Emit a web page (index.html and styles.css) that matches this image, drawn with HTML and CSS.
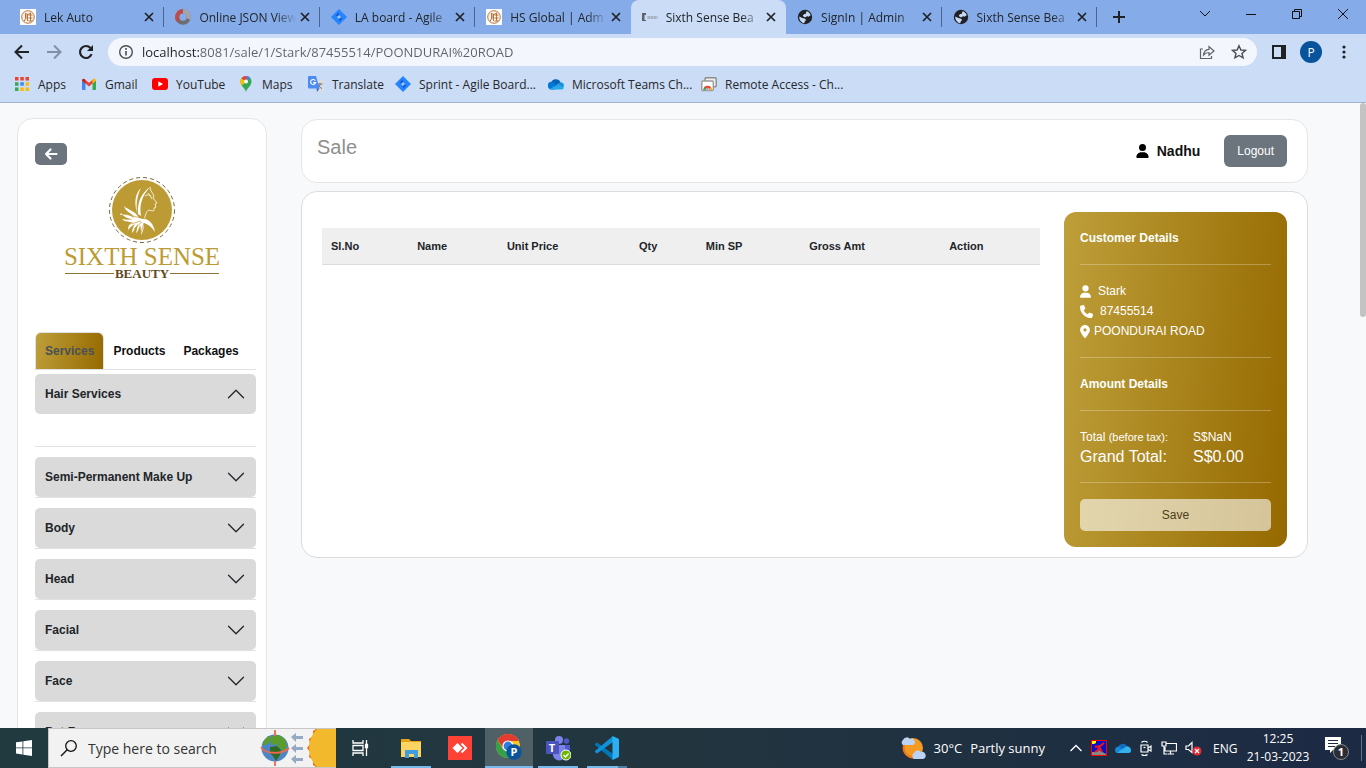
FILE: index.html
```html
<!DOCTYPE html>
<html lang="en">
<head>
	<meta charset="UTF-8">
	<meta name="viewport" content="width=device-width, initial-scale=1.0">
	<title>Sixth Sense Beauty</title>
	<link rel="stylesheet" href="styles.css">
</head>
<body>
	<svg class="defs" width="0" height="0" aria-hidden="true">
		<symbol id="close" viewBox="0 0 10 10"><path d="M1 1l8 8M9 1l-8 8" stroke="#202124" stroke-width="1.7"/></symbol>
		<symbol id="seal" viewBox="0 0 16 16"><path fill="#fff" d="M0 0h16v16H0z"/><circle cx="8" cy="8" r="6.300" fill="#fbf3ea" stroke="#b9793f" stroke-width="1"/><path d="M5.500 4v5.500l-1.500 3M5.500 5h2v7M5.500 7h2M5.500 9h2M10.500 3.500v8.500M8.500 6h4M8.500 9h4M8.500 12h4M9.500 4l-1 2" fill="none" stroke="#b06a2c" stroke-width=".9"/></symbol>
		<symbol id="jira" viewBox="0 0 16 16"><path fill="#2684ff" d="M8 0l8 8-8 8-8-8z"/><path fill="#1558c8" d="M8 3.200L4.600 6.600 8 8zM8 12.800l3.400-3.400L8 8z"/><path fill="#9cc4ff" d="M8 6L10 8 8 10 6 8z"/></symbol>
		<symbol id="globe" viewBox="0 0 16 16"><circle cx="8" cy="8" r="7.200" fill="#202124"/><path fill="#c6d8f3" d="M9.500 2.200c2 .4 3.700 2 4.200 4l-2.200 1.500-1.700-.6-.6 1.200-2.400-.2-1-1.500 1.400-1.500h1.500zM2.300 7.500l3 1.500 2.300.4 1.700 1.600-1.300 1-.8 2.300C4.500 13.600 2 11 2.300 7.500z"/></symbol>
		<symbol id="person" viewBox="0 0 448 512"><path d="M224 256a128 128 0 1 0 0-256 128 128 0 1 0 0 256zm-45.700 48C79.800 304 0 383.800 0 482.300 0 498.700 13.300 512 29.700 512h388.600c16.400 0 29.700-13.300 29.700-29.700C448 383.800 368.200 304 269.700 304h-91.400z"/></symbol>
		<symbol id="chevron" viewBox="0 0 16 16"><path d="M2 5l6 6 6-6" fill="none" stroke="#212529" stroke-width="1" stroke-linecap="round" stroke-linejoin="round"/></symbol>
	</svg>

	<header class="browser">
		<div class="tab-strip">
			<div class="tabs">
				<div class="tab"><svg class="favicon"><use href="#seal"/></svg><span>Lek Auto</span><button aria-label="Close tab"><svg><use href="#close"/></svg></button></div>
				<div class="tab"><svg class="favicon" viewBox="0 0 16 16" fill="none" stroke-width="4"><circle cx="8" cy="8" r="5.800" stroke="#6d6d72"/><path d="M3.500 11.700A5.800 5.800 0 0 1 8 2.200" stroke="#c04a4a"/><path d="M8 2.200A5.800 5.800 0 0 1 13.500 10" stroke="#a9a4a8"/></svg><span>Online JSON View</span><button aria-label="Close tab"><svg><use href="#close"/></svg></button></div>
				<div class="tab"><svg class="favicon"><use href="#jira"/></svg><span>LA board - Agile</span><button aria-label="Close tab"><svg><use href="#close"/></svg></button></div>
				<div class="tab before-active"><svg class="favicon"><use href="#seal"/></svg><span>HS Global | Adm</span><button aria-label="Close tab"><svg><use href="#close"/></svg></button></div>
				<div class="tab active"><svg class="favicon" viewBox="0 0 16 16"><path d="M0 4h4v2H2.500v5H4v1H0z" fill="#5d636b"/><path d="M5 7h11v3H5z" fill="#b7c2d2"/><path d="M7 7v3M10 7v3M13 7v3" stroke="#93a0b3" stroke-width=".8"/></svg><span>Sixth Sense Bea</span><button aria-label="Close tab"><svg><use href="#close"/></svg></button></div>
				<div class="tab"><svg class="favicon"><use href="#globe"/></svg><span>SignIn | Admin</span><button aria-label="Close tab"><svg><use href="#close"/></svg></button></div>
				<div class="tab"><svg class="favicon"><use href="#globe"/></svg><span>Sixth Sense Bea</span><button aria-label="Close tab"><svg><use href="#close"/></svg></button></div>
			</div>
			<button class="new-tab" aria-label="New tab"><svg width="12" height="12" viewBox="0 0 12 12"><path d="M6 0v12M0 6h12" stroke="#202124" stroke-width="2"/></svg></button>
			<div class="window-controls">
				<button aria-label="Search tabs"><svg width="12" height="12" viewBox="0 0 12 12"><path d="M1 3l5 5 5-5"/></svg></button>
				<button aria-label="Minimize"><svg width="12" height="12" viewBox="0 0 12 12"><path d="M1 6.500h10"/></svg></button>
				<button aria-label="Restore"><svg width="12" height="12" viewBox="0 0 12 12"><path d="M1.500 3.500h7v7h-7zM3.500 3.500v-2h7v7h-2"/></svg></button>
				<button aria-label="Close"><svg width="12" height="12" viewBox="0 0 12 12"><path d="M1 1l10 10M11 1L1 11"/></svg></button>
			</div>
		</div>

		<div class="toolbar">
			<button aria-label="Back"><svg width="16" height="16" viewBox="0 0 16 16"><path d="M15 8H2M8 1.500L1.500 8 8 14.500" fill="none" stroke="#202124" stroke-width="2"/></svg></button>
			<button aria-label="Forward"><svg width="16" height="16" viewBox="0 0 16 16"><path d="M1 8h13M8 1.500L14.500 8 8 14.500" fill="none" stroke="#8390a6" stroke-width="2"/></svg></button>
			<button aria-label="Reload"><svg width="16" height="16" viewBox="0 0 16 16"><path d="M13.600 10.200A6 6 0 1 1 12.500 4" fill="none" stroke="#202124" stroke-width="2.200"/><path d="M15 1v6H9z" fill="#202124"/></svg></button>
			<div class="omnibox">
				<svg width="16" height="16" viewBox="0 0 16 16"><circle cx="8" cy="8" r="6.300" fill="none" stroke="#4a4d51" stroke-width="1.400"/><path d="M8 7v4.500M8 4v1.700" stroke="#4a4d51" stroke-width="1.600"/></svg>
				<input type="text" aria-label="Address" value="localhost:8081/sale/1/Stark/87455514/POONDURAI%20ROAD">
				<button aria-label="Share"><svg width="16" height="16" viewBox="0 0 16 16" fill="none" stroke="#5f6368" stroke-width="1.200"><path d="M4 5H1.500v9.500h11V12"/><path d="M4.500 11C4.800 7.500 6.800 5.500 10 5.300V2.500L15 7l-5 4.200V8.500C7.500 8.500 6 9.200 4.500 11z"/></svg></button>
				<button aria-label="Bookmark this tab"><svg width="16" height="16" viewBox="0 0 16 16"><path d="M8 1.800l1.900 4.200 4.600.4-3.500 3 1.100 4.500L8 11.500l-4.100 2.400L5 9.400l-3.500-3 4.600-.4z" fill="none" stroke="#4a4d51" stroke-width="1.400"/></svg></button>
			</div>
			<button class="side-panel" aria-label="Side panel"><svg width="14" height="14" viewBox="0 0 14 14"><path d="M1 1h12v12H1z" fill="none" stroke="#202124" stroke-width="2"/><path d="M9 1h4v12H9z" fill="#202124"/></svg></button>
			<button class="profile">P</button>
			<button class="menu" aria-label="Menu"><svg width="4" height="14" viewBox="0 0 4 14" fill="#202124"><circle cx="2" cy="2" r="1.600"/><circle cx="2" cy="7" r="1.600"/><circle cx="2" cy="12" r="1.600"/></svg></button>
		</div>

		<nav class="bookmarks">
			<a href="#"><svg viewBox="0 0 16 16"><path fill="#ea4335" d="M1 1h3.500v3.500H1zM6.300 1h3.500v3.500H6.300zM11.500 1H15v3.500h-3.500z"/><path fill="#34a853" d="M1 6.200h3.500v3.500H1zM1 11.500h3.500V15H1z"/><path fill="#4285f4" d="M6.300 6.200h3.500v3.500H6.300z"/><path fill="#fbbc05" d="M11.500 6.200H15v3.500h-3.500zM6.300 11.500h3.500V15H6.300zM11.500 11.500H15V15h-3.500z"/></svg>Apps</a>
			<a href="#"><svg viewBox="0 0 16 16"><path fill="#4285f4" d="M1 4.500l3.500 2.500v7H2a1 1 0 0 1-1-1z"/><path fill="#34a853" d="M15 4.500L11.500 7v7H14a1 1 0 0 0 1-1z"/><path fill="#ea4335" d="M3 2.800l5 4 5-4 2 1.700-7 6-7-6z"/><path fill="#c5221f" d="M1 4.500a1.500 1.500 0 0 1 2.400-1.400l1.100.9v3.600L1 4.800z"/><path fill="#fbbc04" d="M15 4.500a1.500 1.500 0 0 0-2.400-1.400l-1.100.9v3.600L15 4.800z"/></svg>Gmail</a>
			<a href="#"><svg viewBox="0 0 16 16"><rect y="2" width="16" height="12" rx="3" fill="#f00"/><path d="M6.300 5.300v5.400L11 8z" fill="#fff"/></svg>YouTube</a>
			<a href="#"><svg viewBox="0 0 16 16"><path fill="#34a853" d="M8 16C7 12 2.500 10 2.500 5.500a5.500 5.500 0 0 1 11 0C13.500 10 9 12 8 16z"/><path fill="#4285f4" d="M8 5.500L12 1.800a5.400 5.400 0 0 0-5-1.700z"/><path fill="#ea4335" d="M7.500 0a5.500 5.500 0 0 0-4.200 2.500L8 5.500 9.500 1z"/><path fill="#fbbc04" d="M3.300 2.500a5.500 5.500 0 0 0 .8 7L8 5.500z"/><path fill="#4285f4" d="M12 1.800L8 5.500 9.500.2a5.500 5.500 0 0 1 2.500 1.600z"/><circle cx="8" cy="5.500" r="2" fill="#fff"/></svg>Maps</a>
			<a href="#"><svg viewBox="0 0 16 16"><path fill="#dadce0" d="M6 4h9a1 1 0 0 1 1 1v10a1 1 0 0 1-1 1H9z"/><path d="M9.500 8h5M12 7v1c0 2-1 3.500-2.500 4.500M10.500 9c.5 1.500 2 3 3.500 3.500" stroke="#6d7480" fill="none"/><path fill="#4c8bf5" d="M1 0h7l3.500 12.500H1a1 1 0 0 1-1-1V1a1 1 0 0 1 1-1z"/><path d="M7.300 4.600a2.500 2.500 0 1 0 .3 2H5.300" fill="none" stroke="#fff" stroke-width="1.100"/><path fill="#3b63c7" d="M8.500 12.500h3L9 16z"/></svg>Translate</a>
			<a href="#"><svg><use href="#jira"/></svg>Sprint - Agile Board...</a>
			<a href="#"><svg viewBox="0 0 16 16"><path fill="#0364b8" d="M3 7a5 5 0 0 1 9.500-.7L8 10z"/><path fill="#0078d4" d="M0 10.500A3.500 3.500 0 0 1 4.500 6l7 5-5 2.500h-3a3 3 0 0 1-3.500-3z"/><path fill="#1490df" d="M12 6.300a3.600 3.600 0 0 1 4 3.700l-2 2-4-3.500z"/><path fill="#28a8ea" d="M1.500 13L10 8.500l6 3a2.500 2.500 0 0 1-2.500 2H3.500a4 4 0 0 1-2-.5z"/></svg>Microsoft Teams Ch...</a>
			<a href="#"><svg viewBox="0 0 16 16"><rect x="4" y="1.800" width="11.200" height="9" rx="1" fill="#eee" stroke="#8b8b8b" stroke-width="1.400"/><rect x=".8" y="5" width="11.500" height="9.500" rx="1" fill="#fff" stroke="#9a9a9a" stroke-width="1.400"/><path fill="#ea4335" d="M2.500 13.800a4.100 4.100 0 0 1 8.200 0z"/><path fill="#34a853" d="M2.500 13.800a4.100 4.100 0 0 1 1-3l2.500 3z"/><path fill="#fbbc04" d="M7.500 13.800l2.300-2.500a4 4 0 0 1 .9 2.500z"/><path fill="#4285f4" stroke="#fff" stroke-width=".5" d="M5 13.800a1.600 1.600 0 0 1 3.200 0z"/></svg>Remote Access - Ch...</a>
		</nav>
	</header>

	<div class="page">
		<aside class="sidebar">
			<button class="back-btn" aria-label="Back"><svg width="14" height="14" viewBox="0 0 14 14"><path d="M12.500 7H2M6.500 2.500L2 7l4.500 4.500" fill="none" stroke="#fff" stroke-width="2.200" stroke-linecap="round" stroke-linejoin="round"/></svg></button>
			<div class="logo">
				<svg width="68" height="68" viewBox="0 0 68 68">
					<circle cx="34" cy="34" r="32.500" fill="none" stroke="#7d6939" stroke-dasharray="4 3"/>
					<circle cx="34" cy="34" r="30" fill="#bc9b35"/>
					<path fill="#fff" d="M33 12C27 18 26 26 29 37c-1-9 0-17 4-25zM42 11c-8 6-13 14-12 27l3 2c-2-11 1-20 9-29z"/>
					<path fill="#fff" d="M12 39c6-2 10 0 14 3-2-6-8-5-10-12 4 4 12 5 15 12l6 1c5 1 9 6 10 13-3-5-7-8-11-9 0 5-1 9-3 12 0-4 0-7-1-10-1 3-2 7-4 8 1-3 1-6 2-9-3 3-4 7-6 9 0-3 1-6 3-9-4 2-5 4-7 6 0-4 2-7 5-8-5 0-8 0-11-3 4 1 8 1 11 0-5 0-9-2-12-6z"/>
					<path fill="none" stroke="#fff" stroke-width=".8" d="M42 11c0 4 3 6 4 9l-1 2 4 5-2 1 1 3-2 1c1 4-2 3-5 2-3 1-3 5-5 9M40 17c1 2 3 3 4 6M37 20c3-2 4-1 6 0"/>
					<path fill="none" stroke="#bc9b35" stroke-width=".7" d="M15 38c7 1 14 3 22 5M20 48c5 0 9-2 13-3M26 53l8-7M33 57l3-10"/>
				</svg>
				<div class="brand">SIXTH SENSE</div>
				<div class="brand-sub">BEAUTY</div>
			</div>
			<div class="nav-tabs">
				<button class="active">Services</button>
				<button>Products</button>
				<button>Packages</button>
			</div>
			<div class="accordion">
				<div class="accordion-item open">
					<button>Hair Services<svg width="20" height="20"><use href="#chevron"/></svg></button>
					<div class="accordion-body"></div>
				</div>
				<div class="accordion-item"><button>Semi-Permanent Make Up<svg width="20" height="20"><use href="#chevron"/></svg></button></div>
				<div class="accordion-item"><button>Body<svg width="20" height="20"><use href="#chevron"/></svg></button></div>
				<div class="accordion-item"><button>Head<svg width="20" height="20"><use href="#chevron"/></svg></button></div>
				<div class="accordion-item"><button>Facial<svg width="20" height="20"><use href="#chevron"/></svg></button></div>
				<div class="accordion-item"><button>Face<svg width="20" height="20"><use href="#chevron"/></svg></button></div>
				<div class="accordion-item"><button>Bat Face<svg width="20" height="20"><use href="#chevron"/></svg></button></div>
			</div>
		</aside>

		<main class="content">
			<div class="title-bar">
				<h1>Sale</h1>
				<div class="user"><svg width="13" height="14"><use href="#person"/></svg>Nadhu</div>
				<button class="logout">Logout</button>
			</div>
			<div class="sale">
				<table class="items">
					<thead>
						<tr>
							<th class="col-no">Sl.No</th>
							<th class="col-name">Name</th>
							<th class="col-price">Unit Price</th>
							<th class="col-qty">Qty</th>
							<th class="col-min">Min SP</th>
							<th class="col-gross">Gross Amt</th>
							<th>Action</th>
						</tr>
					</thead>
				</table>
				<section class="summary">
					<h2>Customer Details</h2>
					<hr>
					<p class="person"><svg width="11" height="13"><use href="#person"/></svg>Stark</p>
					<p class="phone"><svg width="13" height="13" viewBox="0 0 512 512"><path d="M164.900 24.600c-7.700-18.600-28-28.500-47.400-23.200l-88 24C12.100 30.200 0 46 0 64c0 247.400 200.600 448 448 448 18 0 33.800-12.100 38.600-29.500l24-88c5.300-19.400-4.600-39.700-23.200-47.400l-96-40c-16.300-6.800-35.200-2.100-46.300 11.600L304.700 368C234.300 334.700 177.300 277.700 144 207.300l49.300-40.300c13.700-11.200 18.400-30 11.600-46.300l-40-96z"/></svg>87455514</p>
					<p><svg width="10" height="13" viewBox="0 0 384 512"><path d="M215.700 499.200C267 435 384 279.400 384 192 384 86 298 0 192 0S0 86 0 192c0 87.400 117 243 168.300 307.200 12.300 15.300 35.100 15.300 47.400 0zM192 128a64 64 0 1 1 0 128 64 64 0 1 1 0-128z"/></svg>POONDURAI ROAD</p>
					<hr>
					<h2>Amount Details</h2>
					<hr>
					<div class="amount"><span>Total <small>(before tax):</small></span><span>S$NaN</span></div>
					<div class="amount grand"><span>Grand Total:</span><span>S$0.00</span></div>
					<hr>
					<button class="save">Save</button>
				</section>
			</div>
		</main>
		<div class="scrollbar"></div>
	</div>

	<footer class="taskbar">
		<button class="start" aria-label="Start"><svg width="16" height="16" viewBox="0 0 16 16" fill="#fff"><path d="M0 2.300l6.500-.9v6.100H0zM7.300 1.300L16 0v7.500H7.300zM0 8.300h6.500v6.100L0 13.600zM7.300 8.300H16V16l-8.700-1.300z"/></svg></button>
		<div class="search">
			<svg width="18" height="18" viewBox="0 0 18 18"><circle cx="11" cy="7" r="5.300" fill="none" stroke="#111" stroke-width="1.300"/><path d="M7.200 10.800L1 17" stroke="#111" stroke-width="1.400"/></svg>
			<input type="text" aria-label="Search" placeholder="Type here to search">
			<svg width="76" height="38" viewBox="0 0 76 38">
				<circle cx="15" cy="19" r="13.500" fill="#4c86c4"/>
				<path fill="#5c9c2f" d="M12 7l7-1 6 4 2 7-3 5-4-2-4-5-4 1-2-4zM3 13l5-6 3 1-2 6-5 3z"/>
				<path fill="#2f6a25" d="M10 18l7-1 4 4-1 5-4 6-3-5-3-3z"/>
				<path d="M15 1v6M15 32v5M1 18c3 7 21 8 28 1" fill="none" stroke="#f2684b" stroke-width="1.800"/>
				<path fill="#93a9c4" d="M31 8l5-4v3h7v3h-7v3zM31 19l5-4v3h7v3h-7v3zM31 30l5-4v3h7v3h-7v3z"/>
				<path fill="#e56a17" d="M56 0l-3 2 0 5-4 3 1 5-3 4 3 4-1 5 4 3 0 5 3 2h20V0z"/>
				<circle cx="76" cy="19" r="27" fill="#f2b92c"/>
			</svg>
		</div>
		<button class="task-view" aria-label="Task view"><svg width="18" height="18" viewBox="0 0 18 18" fill="none" stroke="#fff" stroke-width="1.300"><path d="M2 1v3h10V1M2 6.500h10v5H2zM2 17v-3h10v3M15.500 1v16"/><path fill="#fff" d="M14.500 5.500h2v3h-2z"/></svg></button>
		<div class="apps">
			<button class="running" aria-label="File Explorer"><svg width="24" height="24" viewBox="0 0 24 24"><path fill="#e8a317" d="M2 3h8l2 2h10v4H2z"/><path fill="#fcd462" d="M2 6h20v15H2z"/><path fill="#3f9ee0" d="M6 14h13v8h-4v-4h-5v4H6z"/></svg></button>
			<button aria-label="AnyDesk"><svg width="24" height="24" viewBox="0 0 24 24"><path fill="#ff4136" d="M0 0h24v24H0z"/><path fill="#fff" d="M9.500 7l5 5-5 5-5-5z"/><path d="M13.500 7.500L18 12l-4.500 4.500" fill="none" stroke="#fff" stroke-width="2"/></svg></button>
			<button class="current" aria-label="Chrome"><svg width="26" height="26" viewBox="0 0 26 26"><circle cx="12" cy="12" r="12" fill="#f7c52c"/><path fill="#e33b2e" d="M1.600 6L7 14l5-7h10.900A12 12 0 0 0 1.600 6z"/><path fill="#34a14a" d="M1.600 6l5.200 9 5.200 2 1 7A12 12 0 0 1 1.600 6z"/><circle cx="12" cy="12" r="5.600" fill="#fff"/><circle cx="12" cy="12" r="4.400" fill="#2f7de1"/><circle cx="18" cy="18" r="7.700" fill="#0b539c"/><text x="18" y="22" class="badge-text" text-anchor="middle">P</text></svg></button>
			<button class="running" aria-label="Teams"><svg width="26" height="26" viewBox="0 0 26 26"><circle cx="14" cy="5" r="4" fill="#7b83eb"/><circle cx="21.500" cy="6" r="2.700" fill="#5059c9"/><path fill="#5059c9" d="M17 10h8v8a4 4 0 0 1-8 1z"/><path fill="#7b83eb" d="M8 10h12v9a6 6 0 0 1-12 1z"/><rect x="1" y="6" width="13" height="13" rx="1" fill="#4b53bc"/><text x="7" y="17" class="badge-text" text-anchor="middle">T</text><circle cx="21" cy="20" r="5" fill="#6bb700" stroke="#fff"/><path d="M18.500 20l2 2 3-3.500" fill="none" stroke="#fff" stroke-width="1.400"/></svg></button>
			<button class="running grouped" aria-label="Visual Studio Code"><svg width="24" height="24" viewBox="0 0 24 24"><path fill="#0078b8" d="M0 8l2-1.500L18 18v6L0 9z"/><path fill="#1192dc" d="M0 16l2 1.500L18 6V0L0 15z"/><path fill="#2bb0f5" d="M17.500 0L24 3v18l-6.500 3z"/></svg></button>
		</div>
		<div class="weather">
			<svg width="26" height="24" viewBox="0 0 26 24"><circle cx="13" cy="12" r="10" fill="#f59a23"/><path d="M4 9a10 10 0 0 0 13 12" fill="none" stroke="#e9781a" stroke-width="2"/><path fill="#bdd3f5" d="M3 9a3 3 0 0 1 0-5 4 4 0 0 1 7-1 3 3 0 0 1 3 6zM14 23a3.500 3.500 0 0 1 0-6 4 4 0 0 1 7-1 3.600 3.600 0 0 1 2 7z"/></svg>
			<span>30°C</span><span>Partly sunny</span>
		</div>
		<div class="tray">
			<svg width="14" height="16" viewBox="0 0 14 16"><path d="M1.500 11L7 5.500l5.500 5.500" fill="none" stroke="#fff" stroke-width="1.400"/></svg>
			<svg width="16" height="16" viewBox="0 0 16 16"><path fill="#0a10c8" stroke="#f00" d="M.5.500h15v15H.5z"/><path fill="#ff0" d="M1 1h4v2L3 4H1z"/><path fill="#888" d="M1 12h5l2-2 7 4v1H1z"/><path d="M4 7l5-1 4-3M9 6l-2 4-3 2M9 8l2 4" stroke="#f01818" stroke-width="2" fill="none"/></svg>
			<svg width="16" height="16" viewBox="0 0 16 16"><path fill="#0f6cbd" d="M3 8a5 5 0 0 1 9-2l-3 4z"/><path fill="#1688d8" d="M0 10.500A3.500 3.500 0 0 1 5 7l6 6H3.500A3 3 0 0 1 0 10.500z"/><path fill="#35b1f0" d="M2 13l9-6.500a4 4 0 0 1 5 4 2.500 2.500 0 0 1-2.500 2.500z"/></svg>
			<svg width="14" height="16" viewBox="0 0 14 16" fill="none" stroke="#fff" stroke-width="1.200"><path d="M2 5h7v7H2zM9 8l3-2v5L9 9.500M2.500 2.500C4 .8 7 .8 8.500 2.500M2.500 14.500c1.500 1.300 4.500 1.300 6 0"/><path d="M4.500 7.500h2"/></svg>
			<svg width="16" height="16" viewBox="0 0 16 16" fill="none" stroke="#fff" stroke-width="1.200"><path d="M5 3.500h10.500v7.500H4V7M1 2h4v4H1zM3 6v8h3M9.500 11v3M6.500 14h6.500"/></svg>
			<svg width="17" height="16" viewBox="0 0 17 16"><path d="M1 6h2.500L7 2.500v10L3.500 9.500H1z" fill="none" stroke="#fff" stroke-width="1.200"/><circle cx="12" cy="11" r="4.500" fill="#e02b30"/><path d="M10 9l4 4M14 9l-4 4" stroke="#fff" stroke-width="1.200"/></svg>
		</div>
		<span class="lang">ENG</span>
		<div class="clock"><time>12:25</time><time>21-03-2023</time></div>
		<button class="notifications" aria-label="Notifications"><svg width="26" height="26" viewBox="0 0 26 26"><path fill="#fff" d="M1 2h16v13H9l-3 3v-3H1z"/><path d="M4 5.500h10M4 8.500h10M4 11.500h7" stroke="#1d2c40" stroke-width="1.200"/><circle cx="17" cy="17" r="7.500" fill="#2b2d31" stroke="#858990"/><text x="17" y="21" class="badge-text" text-anchor="middle">1</text></svg></button>
	</footer>
</body>
</html>
```

FILE: styles.css
```css
* {
	box-sizing: border-box;
}

body {
	display: flex;
	flex-direction: column;
	height: 100vh;
	margin: 0;
	overflow: hidden;
	font-family: "Liberation Sans", Arial, sans-serif;
	font-size: 12px;
	color: #212529;
	background-color: #f8f9fb;
}

button {
	padding: 0;
	border: 0;
	background: none;
	font: inherit;
	color: inherit;
	cursor: pointer;
}

svg {
	display: block;
	flex: none;
}

h1, h2, p {
	margin: 0;
}

.defs {
	position: absolute;
}

/* Browser window */
.browser {
	flex: none;
	background-color: #cbdcf6;
	border-bottom: 1px solid #a3b3cc;
	font-family: "Open Sans", "Noto Sans", sans-serif;
}

.tab-strip {
	display: flex;
	height: 34px;
	padding-left: 9px;
	background-color: #85ace9;
}

.tabs {
	display: flex;
	flex: 0 1 1088px;
	min-width: 0;
}

.tab {
	display: flex;
	flex: 1 1 0;
	align-items: center;
	min-width: 0;
	padding: 0 10px 0 11px;
	background: linear-gradient(#4c6590, #4c6590) right center / 1px 20px no-repeat;
}

.tab.active {
	background: #cbdcf6;
	border-radius: 8px 8px 0 0;
}

.tab.before-active {
	background: none;
}

.tab span {
	flex: 1;
	min-width: 0;
	margin-left: 8px;
	overflow: hidden;
	white-space: nowrap;
	-webkit-mask-image: linear-gradient(to left, transparent, #000 20px);
	mask-image: linear-gradient(to left, transparent, #000 20px);
}

.tab button {
	margin-left: 4px;
}

.tab button svg {
	width: 10px;
	height: 10px;
}

.favicon {
	width: 16px;
	height: 16px;
}

.new-tab {
	padding: 0 16px;
}

.window-controls {
	display: flex;
	gap: 34px;
	margin-left: auto;
	padding: 0 17px 6px 0;
	fill: none;
	stroke: #111;
}

.toolbar {
	display: flex;
	align-items: center;
	height: 36px;
	padding: 0 20px 0 14px;
}

.toolbar > button + button {
	margin-left: 16px;
}

.omnibox {
	display: flex;
	flex: 1;
	align-items: center;
	height: 28px;
	margin: 0 15px 0 14px;
	padding: 0 10px;
	border-radius: 14px;
	background-color: #f3f7fd;
}

.omnibox input {
	flex: 1;
	padding: 0 0 0 8px;
	border: 0;
	outline: 0;
	background: linear-gradient(to right, #202124 66px, #5f6368 66px);
	-webkit-background-clip: text;
	background-clip: text;
	color: transparent;
	font-family: inherit;
	font-size: 13px;
}

.omnibox button {
	margin-left: 16px;
}

.toolbar .profile {
	width: 22px;
	height: 22px;
	margin-left: 14px;
	border-radius: 50%;
	background-color: #07549c;
	color: #fff;
}

.toolbar .menu {
	margin-left: 20px;
}

.bookmarks {
	display: grid;
	grid-template-columns: 67px 71px 86px 70px 87px 153px 153px auto;
	height: 32px;
	padding: 0 14px 4px;
}

.bookmarks a {
	display: flex;
	align-items: center;
	gap: 8px;
	color: #26282b;
	text-decoration: none;
	white-space: nowrap;
}

.bookmarks svg {
	width: 16px;
	height: 16px;
}

/* Page */
.page {
	display: flex;
	flex: 1;
	min-height: 0;
	overflow: hidden;
}

.scrollbar {
	width: 6px;
	height: 214px;
	border-radius: 3px;
	background-color: #c3c3c3;
}

.sidebar {
	flex: none;
	align-self: flex-start;
	width: 250px;
	margin: 15px 34px 0 17px;
	padding: 24px 10px 24px 17px;
	border: 1px solid #e4e5e7;
	border-radius: 16px;
	background-color: #fff;
}

.back-btn {
	display: flex;
	align-items: center;
	justify-content: center;
	width: 32px;
	height: 22px;
	border-radius: 5px;
	background-color: #6c757d;
}

.logo {
	display: flex;
	flex-direction: column;
	align-items: center;
	width: 154px;
	margin: 11px 0 52px 30px;
	font-family: "Liberation Serif", "Times New Roman", serif;
	white-space: nowrap;
}

.brand {
	margin-top: 3px;
	font-size: 25px;
	line-height: 20px;
	color: #bc9b35;
}

.brand-sub {
	display: flex;
	align-items: center;
	gap: 1px;
	width: 100%;
	font-size: 13px;
	font-weight: bold;
	line-height: 13px;
	color: #5f4a1c;
}

.brand-sub::before,
.brand-sub::after {
	content: "";
	flex: 1;
	height: 1px;
	background-color: #8f7434;
}

.nav-tabs {
	display: flex;
	border-bottom: 1px solid #dee2e6;
	font-weight: bold;
	color: #111;
}

.nav-tabs button {
	height: 37px;
	padding: 0 9px;
}

.nav-tabs .active {
	border: 1px solid #dee2e6;
	border-bottom: 0;
	border-radius: 6px 6px 0 0;
	background: linear-gradient(100deg, #be9f3a, #956900);
	color: #495057;
}

.accordion {
	margin-top: 4px;
}

.accordion-item {
	margin-bottom: 10px;
	border-bottom: 1px solid #dee2e6;
}

.accordion-item button {
	display: flex;
	align-items: center;
	justify-content: space-between;
	width: 100%;
	height: 40px;
	padding: 0 10px;
	border-radius: 5px;
	background-color: #dadada;
	font-weight: bold;
}

.accordion-item.open svg {
	transform: rotate(180deg);
}

.accordion-body {
	height: 32px;
}

.content {
	flex: 1;
	min-width: 0;
	margin: 16px 52px 0 0;
}

.title-bar {
	display: flex;
	align-items: center;
	height: 64px;
	margin-bottom: 8px;
	padding: 0 20px 0 15px;
	border: 1px solid #e6e6e8;
	border-radius: 16px;
	background-color: #fff;
}

.title-bar h1 {
	flex: 1;
	padding-bottom: 8px;
	font-size: 20px;
	font-weight: normal;
	color: #8f8f8f;
}

.user {
	display: flex;
	align-items: center;
	gap: 8px;
	margin-right: 24px;
	font-size: 14px;
	font-weight: bold;
	color: #111;
}

.logout {
	height: 32px;
	padding: 0 13px;
	border-radius: 6px;
	background-color: #6c757d;
	color: #fff;
}

.sale {
	display: flex;
	gap: 24px;
	align-items: flex-start;
	padding: 20px 20px 10px;
	border: 1px solid #dcdcde;
	border-radius: 16px;
	background-color: #fff;
}

.items {
	flex: 1;
	margin-top: 16px;
	border-collapse: collapse;
	table-layout: fixed;
	font-size: 11px;
}

.items th {
	height: 36px;
	padding: 0 9px;
	border-bottom: 1px solid #dcdcdc;
	background-color: #efefef;
	text-align: left;
}

.col-no { width: 12%; }
.col-name { width: 12.5%; }
.col-price { width: 18.4%; }
.col-qty { width: 9.3%; }
.col-min { width: 14.4%; }
.col-gross { width: 19.5%; }

.summary {
	flex: none;
	width: 223px;
	padding: 16px;
	border-radius: 12px;
	background: linear-gradient(95deg, #be9f3a, #956900);
	color: #fff;
	line-height: 20px;
}

.summary h2 {
	font-size: 12px;
}

.summary hr {
	margin: 16px 0;
	border: 0;
	border-top: 1px solid rgba(255, 255, 255, 0.27);
}

.summary p {
	display: flex;
	align-items: center;
	gap: 4px;
	fill: #fff;
}

.summary .person,
.summary .phone {
	gap: 7px;
}

.amount {
	display: grid;
	grid-template-columns: 113px auto;
	white-space: nowrap;
}

.amount small {
	font-size: 11px;
}

.grand {
	font-size: 16px;
	line-height: 19px;
}

.save {
	display: block;
	width: 100%;
	height: 32px;
	border-radius: 5px;
	background-color: rgba(255, 255, 255, 0.6);
	color: #4d3d17;
}

/* Windows taskbar */
.taskbar {
	display: flex;
	flex: none;
	align-items: center;
	height: 40px;
	background: linear-gradient(to right, #213a40, #22353f 50%, #1c2a44);
	color: #fff;
	font-family: "Open Sans", "Noto Sans", sans-serif;
}

.start {
	padding: 0 16px;
}

.search {
	display: flex;
	align-items: center;
	width: 288px;
	height: 40px;
	padding-left: 11px;
	border: 1px solid #c6c6c6;
	border-right: 0;
	background-color: #f2f2f2;
}

.search input {
	flex: 1;
	min-width: 0;
	padding: 0 0 0 10px;
	border: 0;
	outline: 0;
	background: none;
	font-family: inherit;
	font-size: 14px;
}

.search input::placeholder {
	color: #333;
}

.task-view {
	padding: 0 15px;
}

.apps {
	display: flex;
	gap: 1px;
	margin-left: 3px;
}

.apps button {
	display: flex;
	align-items: center;
	justify-content: center;
	width: 48px;
	height: 40px;
}

.apps .running {
	background: linear-gradient(#76b9ed, #76b9ed) center bottom / 40px 2px no-repeat;
}

.apps .grouped {
	background-image: linear-gradient(to right, #76b9ed 31px, #4c7fa6 31px);
}

.apps .current {
	border-bottom: 2px solid #76b9ed;
	background-color: #4f6067;
}

.badge-text {
	font-size: 11px;
	font-weight: bold;
	fill: #fff;
}

.weather {
	display: flex;
	align-items: center;
	gap: 8px;
	margin-left: auto;
	font-size: 13px;
	white-space: nowrap;
}

.tray {
	display: flex;
	align-items: center;
	gap: 8px;
	margin: 0 11px 0 24px;
}

.lang {
	width: 24px;
}

.clock {
	display: flex;
	flex-direction: column;
	align-items: center;
	width: 60px;
	margin-left: 11px;
	line-height: 18px;
	white-space: nowrap;
}

.notifications {
	margin: 0 4px 0 16px;
	padding-right: 11px;
	border-right: 1px solid #65707f;
}
```
